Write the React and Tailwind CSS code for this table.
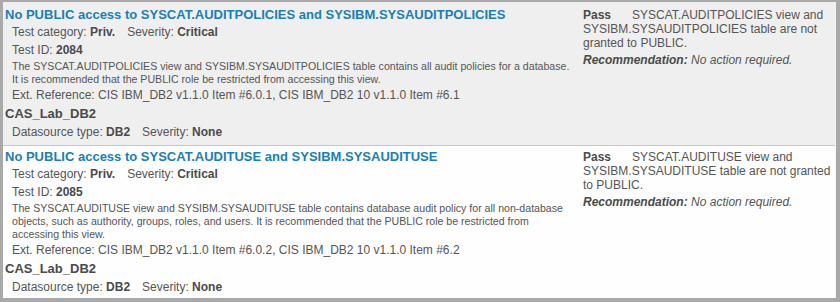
const results = [
  {
    title: 'No PUBLIC access to SYSCAT.AUDITPOLICIES and SYSIBM.SYSAUDITPOLICIES',
    category: 'Priv.',
    severity: 'Critical',
    testId: '2084',
    description:
      'The SYSCAT.AUDITPOLICIES view and SYSIBM.SYSAUDITPOLICIES table contains all audit policies for a database. It is recommended that the PUBLIC role be restricted from accessing this view.',
    reference: 'CIS IBM_DB2 v1.1.0 Item #6.0.1, CIS IBM_DB2 10 v1.1.0 Item #6.1',
    datasource: 'CAS_Lab_DB2',
    dsType: 'DB2',
    dsSeverity: 'None',
    status: 'Pass',
    message: 'SYSCAT.AUDITPOLICIES view and SYSIBM.SYSAUDITPOLICIES table are not granted to PUBLIC.',
    recommendation: 'No action required.',
  },
  {
    title: 'No PUBLIC access to SYSCAT.AUDITUSE and SYSIBM.SYSAUDITUSE',
    category: 'Priv.',
    severity: 'Critical',
    testId: '2085',
    description:
      'The SYSCAT.AUDITUSE view and SYSIBM.SYSAUDITUSE table contains database audit policy for all non-database objects, such as authority, groups, roles, and users. It is recommended that the PUBLIC role be restricted from accessing this view.',
    reference: 'CIS IBM_DB2 v1.1.0 Item #6.0.2, CIS IBM_DB2 10 v1.1.0 Item #6.2',
    datasource: 'CAS_Lab_DB2',
    dsType: 'DB2',
    dsSeverity: 'None',
    status: 'Pass',
    message: 'SYSCAT.AUDITUSE view and SYSIBM.SYSAUDITUSE table are not granted to PUBLIC.',
    recommendation: 'No action required.',
  },
];

const ResultRow = ({ r, first }) => (
  <div
    className={
      first
        ? 'flex bg-[#efefef] border-b border-[#c8c8c8] pt-[4px] pb-[4px]'
        : 'flex bg-[#fefefe] pt-[2px] pb-[2px]'
    }
  >
    {/* left: test details */}
    <div className="w-[573px] shrink-0 pl-[2px]">
      <div className="text-[13px] leading-[17px] font-bold text-[#1a7fb3]">{r.title}</div>
      <div className="pl-[7px] text-[12px] leading-[18px] text-[#555]">
        <span className="mr-[12px]">
          Test category: <b className="text-[#4a4a4a]">{r.category}</b>
        </span>
        <span>
          Severity: <b className="text-[#4a4a4a]">{r.severity}</b>
        </span>
      </div>
      <div className="pl-[7px] text-[12px] leading-[18px] text-[#555]">
        Test ID: <b className="text-[#4a4a4a]">{r.testId}</b>
      </div>
      <div className="pl-[7px] pt-[1px] text-[10.6px] leading-[13px] text-[#555]">{r.description}</div>
      <div className="pl-[7px] text-[12px] leading-[18px] text-[#555]">Ext. Reference: {r.reference}</div>
      <div className="text-[13px] leading-[19px] font-bold text-[#4a4a4a]">{r.datasource}</div>
      <div className="pl-[7px] text-[12px] leading-[18px] text-[#555]">
        <span className="mr-[12px]">
          Datasource type: <b className="text-[#4a4a4a]">{r.dsType}</b>
        </span>
        <span>
          Severity: <b className="text-[#4a4a4a]">{r.dsSeverity}</b>
        </span>
      </div>
    </div>

    {/* right: outcome */}
    <div className="flex-1 pl-[7px] pr-[2px] pt-[2px] text-[12px] leading-[14px] text-[#555]">
      <p>
        <b className="mr-[21px] text-[#4a4a4a]">{r.status}</b>
        <span>{r.message}</span>
      </p>
      <p className="mt-[3px] italic">
        <b className="text-[#4a4a4a]">Recommendation:</b> {r.recommendation}
      </p>
    </div>
  </div>
);

export default function App() {
  return (
    <div className="w-[840px] h-[302px] bg-[#a9a9a9] font-['Liberation_Sans',Arial,sans-serif]">
      <div className="h-full border-l-[3px] border-t-2 border-r-4 border-b-4 border-[#a9a9a9]">
        <div className="h-full bg-[#fefefe] border-r border-b border-[#f4f4f4]">
          {results.map((r, i) => (
            <ResultRow key={r.testId} r={r} first={i === 0} />
          ))}
        </div>
      </div>
    </div>
  );
}
